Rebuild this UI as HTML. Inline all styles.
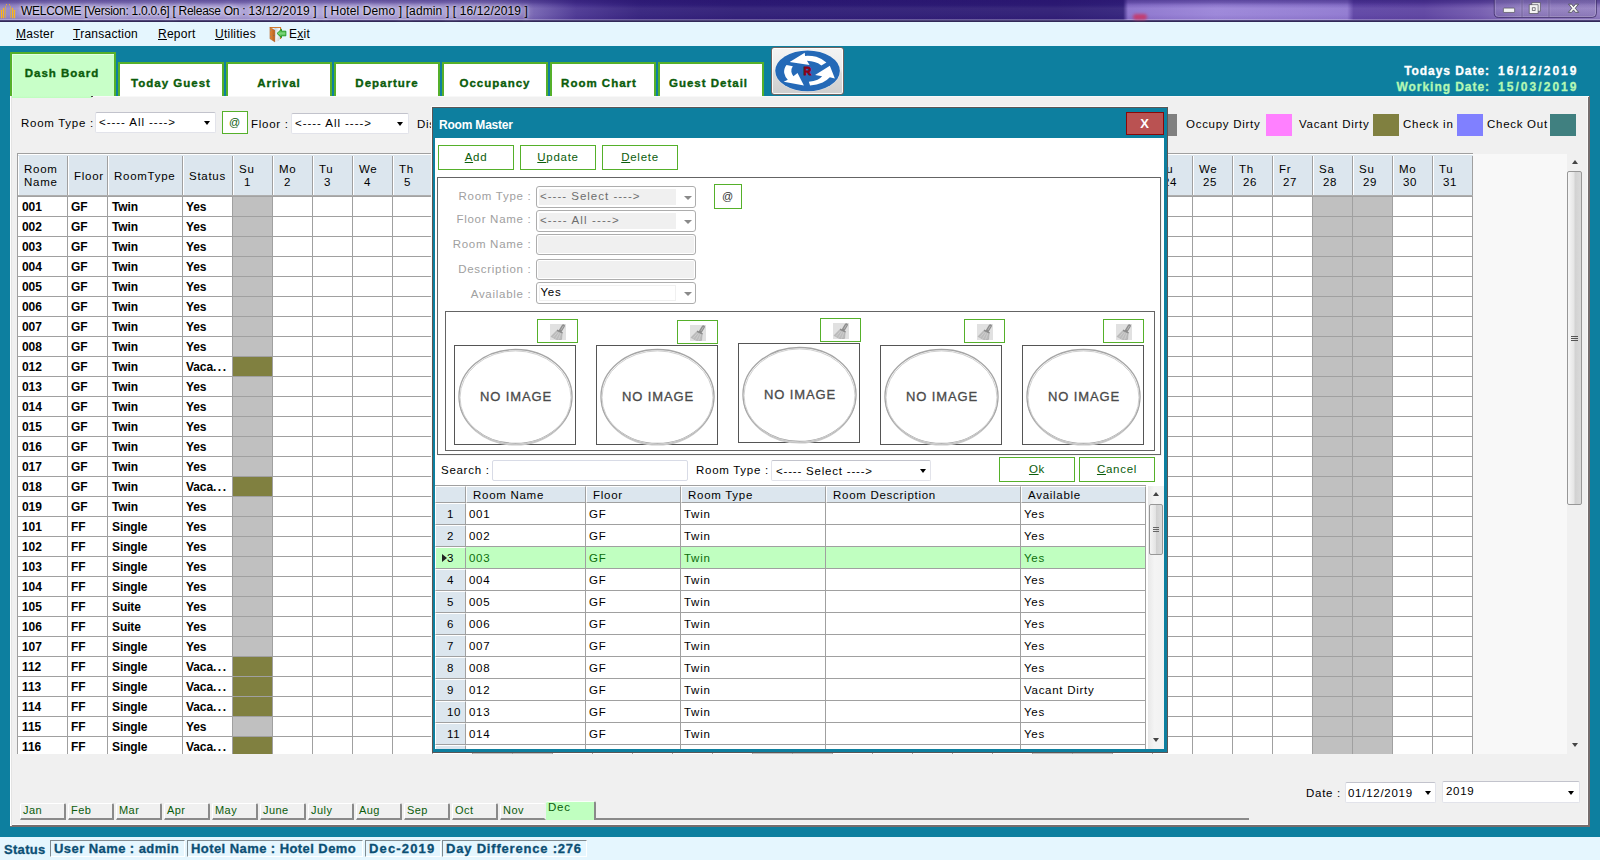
<!DOCTYPE html><html><head><meta charset="utf-8"><title>Room Master</title><style>
*{box-sizing:border-box;margin:0;padding:0}
html,body{width:1600px;height:860px;overflow:hidden;background:#0d7f9f;font-family:"Liberation Sans",sans-serif;font-size:12px;color:#000}
.a{position:absolute;white-space:pre}
.t{position:absolute;white-space:pre;font-size:11.5px;letter-spacing:.72px;line-height:14px}
.b{font-weight:bold}
u{text-decoration:underline}
#title{left:0;top:0;width:1600px;height:21px;background:linear-gradient(90deg,#9486c4 0,#a195cf 3%,#a79bd3 20%,#9a8cca 30%,#7260b0 33.5%,#4a3592 36%,#33207c 40%,#2d1b75 46%,#2c1a73 66%,#31207a 70.2%,#8a72cc 70.5%,#9a84d8 76%,#8f78d0 84.2%,#5d43a4 84.6%,#5c42a0 89%,#7259ae 92.5%,#8a75bc 95%,#8e7abf 100%)}
#titleshade{left:0;top:0;width:1600px;height:21px;background:linear-gradient(180deg,rgba(40,20,110,.55) 0,rgba(40,20,110,.4) 12%,rgba(40,20,110,.12) 24%,rgba(255,255,255,.06) 40%,rgba(255,255,255,.04) 70%,rgba(60,30,120,.12) 100%)}
#menu{left:0;top:22px;width:1600px;height:24px;background:#e5f6fe}
.tab{position:absolute;top:62px;height:36px;width:106px;border:2px solid #55b02a;border-bottom:none;background:#fff;color:#0b5c0b;font-weight:bold;font-size:11.5px;letter-spacing:1px;text-align:center;line-height:39px;white-space:pre;-webkit-text-stroke:.35px #0b5c0b}
#panel{left:10px;top:96px;width:1580px;height:731px;background:#f0f0f0;border-right:2px solid #756d6d;border-bottom:2px solid #756d6d;box-shadow:inset -1px -1px 0 #fafafa}
.combo{position:absolute;background:#fff;border:1px solid #e2e3ea;border-top-color:#c2c3cc;border-radius:2px;height:21px}
.arrow{position:absolute;width:0;height:0;border-left:3.5px solid transparent;border-right:3.5px solid transparent;border-top:4px solid #000;margin-top:-1px;margin-left:.5px}
.gbtn{position:absolute;border:1px solid #55b02a;background:#fff;color:#0b5c0b;text-align:center;white-space:pre;font-size:11.5px;letter-spacing:.72px}
.sw{position:absolute;top:114px;width:26px;height:22px}
.hc{position:absolute;top:0;height:42px;background:#dce6ee;border-right:1px solid #a0a0a0;border-left:1px solid #fff;font-size:11.5px;letter-spacing:.72px;line-height:13px;white-space:pre}
.row{position:absolute;left:0;height:20px;width:1455px}
.c{position:absolute;top:0;height:20px;border-right:1px solid #a0a0a0;border-bottom:1px solid #a0a0a0;background:#fff;font-weight:bold;font-size:12px;letter-spacing:-.1px;line-height:21px;white-space:pre;overflow:hidden}
.mt{position:absolute;top:803px;width:46px;height:17px;border-right:2px solid #8a8a8a;border-bottom:2px solid #8a8a8a;border-top:1px solid #fff;border-left:1px solid #fff;color:#0b5c0b;font-size:11px;letter-spacing:.45px;line-height:12px;padding-left:2px;white-space:pre;background:#f0f0f0;border-radius:2px 2px 0 0}
.sp{position:absolute;top:840px;height:17px;border:1px solid #7f8a90;border-right-color:#fff;border-bottom-color:#fff;color:#0c4f74;font-weight:bold;font-size:13px;letter-spacing:.43px;line-height:16px;padding-left:3px;white-space:pre;-webkit-text-stroke:.3px #0c4f74}
.lbl{position:absolute;color:#a0a0a0;text-align:right;font-size:11.5px;letter-spacing:.72px;white-space:pre;width:95px;left:436.5px}
.dcombo{position:absolute;left:536px;width:160px;height:22px;border:1px solid #adadad;border-radius:3px;background:#fff}
.dinner{position:absolute;left:2px;top:2px;width:137px;height:16px;background:#f0f0f0;font-size:11.5px;letter-spacing:.72px;line-height:15px;color:#6d6d6d;padding-left:1px;white-space:pre}
.darrow{position:absolute;left:147px;top:9px;width:0;height:0;border-left:4px solid transparent;border-right:4px solid transparent;border-top:4px solid #8a8a8a}
.dinput{position:absolute;left:536px;width:160px;height:21px;border:1px solid #adadad;border-radius:3px;background:#f0f0f0;box-shadow:inset 0 0 0 1px #fff}
.imgbox{position:absolute;width:122px;height:100px;border:1px solid #555;background:#fff}
.clr{position:absolute;width:41px;height:24px;border:1px solid #55b02a;background:#fff}
.dh{position:absolute;top:0;height:17px;background:#dce6ee;border-right:1px solid #a0a0a0;border-bottom:1px solid #a0a0a0;font-size:11.5px;letter-spacing:.72px;line-height:15px;white-space:pre;padding-left:6px}
.dr{position:absolute;left:0;width:711px;height:22px}
.dc{position:absolute;top:0;height:22px;border-right:1px solid #a0a0a0;border-bottom:1px solid #a0a0a0;background:#fff;font-size:11.5px;letter-spacing:.72px;line-height:23px;white-space:pre;padding-left:3px;overflow:hidden}
.sel .dc{background:#c0ffc0;color:#0b6e0b}
.sel .rh{color:#000}
.dc.rh{line-height:21px}
.rh{background:#dce6ee;text-align:left;padding-left:11px;border-top:1px solid #fff;border-left:1px solid #fff}
</style></head><body>
<div class="a" id="title"></div><div class="a" id="titleshade"></div>
<div class="a" style="left:0;top:19px;width:1600px;height:1px;background:rgba(255,255,255,.28)"></div>
<div class="a" style="left:0;top:20px;width:1600px;height:2px;background:linear-gradient(180deg,#5b4f86,#241d48)"></div>
<div class="a" style="left:1133px;top:14px;width:14px;height:6px;border-radius:3px;background:#d0305a;filter:blur(1.5px);opacity:.8"></div>
<svg class="a" style="left:0;top:0" width="56" height="24" viewBox="0 0 1600 686"><g stroke-linecap="round" stroke-width="34"><line x1="42" y1="295" x2="42" y2="505" stroke="#fdb813"/><line x1="100" y1="240" x2="100" y2="505" stroke="#fdb813"/><line x1="156" y1="190" x2="156" y2="505" stroke="#d8a850" stroke-width="24"/><line x1="300" y1="190" x2="300" y2="505" stroke="#d8a850" stroke-width="24"/><line x1="357" y1="240" x2="357" y2="505" stroke="#fdb813"/><line x1="415" y1="295" x2="415" y2="505" stroke="#fdb813"/></g><circle cx="185" cy="130" r="17" fill="#f0b030"/><circle cx="270" cy="130" r="17" fill="#f0b030"/><path d="M185 140 L150 200 M270 140 L305 200" stroke="#dca848" stroke-width="12" fill="none"/></svg>
<div class="a" style="left:21px;top:4px;font-size:12px;letter-spacing:-.2px;line-height:14px;text-shadow:0 0 6px rgba(255,255,255,.9),0 0 3px rgba(255,255,255,.8)"><span style="letter-spacing:-.27px">WELCOME [Version: 1.0.0.6] [ Release On : </span><span style="letter-spacing:.13px">13/12/2019 ]  [ Hotel Demo ] [admin ] [ 16/12/2019 ]</span></div>
<svg class="a" style="left:1480px;top:0" width="120" height="24" viewBox="0 0 1600 320"><defs><linearGradient id="wb" x1="0" x2="0" y1="0" y2="1"><stop offset="0" stop-color="#fff" stop-opacity=".16"/><stop offset=".5" stop-color="#fff" stop-opacity=".06"/><stop offset="1" stop-color="#000" stop-opacity=".05"/></linearGradient></defs><path d="M190 -20 L190 180 Q190 232 245 232 L1500 232 Q1552 232 1552 180 L1552 -20 Z" fill="url(#wb)" stroke="#392a62" stroke-width="10"/><path d="M203 -20 L203 176 Q203 220 248 220 L1496 220 Q1540 220 1540 176 L1540 -20" fill="none" stroke="#fff" stroke-opacity=".42" stroke-width="7"/><path d="M560 0 L560 225 M920 0 L920 225" stroke="#43346e" stroke-width="8"/><path d="M571 0 L571 222 M931 0 L931 222 M549 0 L549 222 M909 0 L909 222" stroke="#fff" stroke-opacity=".35" stroke-width="6"/><rect x="312" y="108" width="150" height="58" rx="8" fill="#f4f4f4" stroke="#4a4a52" stroke-width="9"/><path d="M690 35 L805 35 L805 150 L690 150 Z" fill="#f4f4f4" stroke="#4a4a52" stroke-width="9"/><path d="M657 62 L775 62 L775 180 L657 180 Z M698 102 L698 140 L736 140 L736 102 Z" fill="#f4f4f4" fill-rule="evenodd" stroke="#4a4a52" stroke-width="9"/><path d="M1180 55 L1222 55 L1247 88 L1272 55 L1314 55 L1270 110 L1316 165 L1272 165 L1247 132 L1222 165 L1178 165 L1224 110 Z" fill="#f6f6f6" stroke="#4a4a52" stroke-width="11" stroke-linejoin="round"/></svg>
<div class="a" id="menu"></div>
<div class="a" style="left:16px;top:27px;font-size:12px;letter-spacing:.25px;line-height:14px"><u>M</u>aster</div>
<div class="a" style="left:73px;top:27px;font-size:12px;letter-spacing:.25px;line-height:14px"><u>T</u>ransaction</div>
<div class="a" style="left:158px;top:27px;font-size:12px;letter-spacing:.25px;line-height:14px"><u>R</u>eport</div>
<div class="a" style="left:215px;top:27px;font-size:12px;letter-spacing:.25px;line-height:14px"><u>U</u>tilities</div>
<div class="a" style="left:289px;top:27px;font-size:12px;letter-spacing:.25px;line-height:14px">E<u>x</u>it</div>
<svg class="a" style="left:264px;top:22px" width="56" height="24" viewBox="0 0 1600 686"><defs><linearGradient id="dg" x1="0" x2="1"><stop offset="0" stop-color="#e08a3c"/><stop offset="1" stop-color="#b85e1c"/></linearGradient><linearGradient id="pg" x1="0" x2="1" y1="0" y2="1"><stop offset="0" stop-color="#bcd0dc"/><stop offset=".5" stop-color="#f4f6f8"/><stop offset="1" stop-color="#c4ccd2"/></linearGradient><linearGradient id="ag" y1="0" y2="1" x1="0" x2="0"><stop offset="0" stop-color="#2aa82a"/><stop offset=".5" stop-color="#7ad67a"/><stop offset="1" stop-color="#2aa82a"/></linearGradient></defs><path d="M165 140 L488 140 L488 485 L455 485 L455 172 L165 172 Z" fill="#d07a30"/><path d="M300 175 L455 175 L455 480 L420 545 L300 565 Z" fill="url(#pg)"/><path d="M168 150 L310 235 L310 572 L168 478 Z" fill="url(#dg)" stroke="#a85418" stroke-width="10"/><rect x="172" y="228" width="22" height="26" fill="#8a8a8a"/><rect x="172" y="400" width="22" height="26" fill="#8a8a8a"/><rect x="262" y="375" width="40" height="22" fill="#7a6a5a"/><path d="M372 326 L500 205 L500 262 L625 262 L625 395 L500 395 L500 450 Z" fill="url(#ag)" stroke="#0c8c0c" stroke-width="22" stroke-linejoin="round"/></svg>
<div class="tab" style="left:10px;top:52px;height:46px;background:#c8ffc8;line-height:38px;padding-right:2px;box-shadow:inset 1px 1px 0 rgba(255,255,255,.5)">Dash Board</div>
<div class="tab" style="left:118px;padding-right:0px">Today Guest</div>
<div class="tab" style="left:226px;padding-right:0px">Arrival</div>
<div class="tab" style="left:334px;padding-right:0px">Departure</div>
<div class="tab" style="left:442px;padding-right:0px">Occupancy</div>
<div class="tab" style="left:550px;padding-right:8px">Room Chart</div>
<div class="tab" style="left:658px;padding-right:5px">Guest Detail</div>
<div class="a" style="left:771px;top:47px;width:73px;height:48px;border:1px solid #6e6462;border-radius:3px;background:linear-gradient(180deg,#f3f3f3 0,#ebebeb 45%,#d9d9d9 55%,#cecece 100%);box-shadow:inset 0 0 0 1px rgba(255,255,255,.85)"></div>
<svg class="a" style="left:768px;top:44px" width="80" height="54" viewBox="0 0 1274 860"><ellipse cx="630" cy="428" rx="522" ry="330" fill="#fff" opacity=".7"/><ellipse cx="630" cy="428" rx="515" ry="324" fill="#2469b7"/><g fill="#fff"><path d="M345 285 L585 140 L590 190 Q690 185 770 205 Q860 235 930 295 L850 342 Q800 300 740 285 Q690 268 620 265 L662 335 Z"/><path d="M985 345 L1065 550 L985 530 Q940 580 870 612 Q780 650 670 660 L650 600 Q730 592 790 568 Q830 550 862 515 L750 492 Z"/><path d="M572 662 L250 600 L315 570 Q270 520 258 460 Q250 390 295 335 L395 355 Q365 400 372 440 Q380 485 405 515 L470 460 Z"/></g><text x="627" y="492" text-anchor="middle" font-family="Liberation Sans,sans-serif" font-weight="bold" font-size="172" fill="#8b0018" stroke="#8b0018" stroke-width="12">R</text></svg>
<div class="a b" style="right:110px;top:64px;font-size:12px;letter-spacing:.95px;color:#fff;line-height:14px;-webkit-text-stroke:.3px #fff">Todays Date:</div>
<div class="a b" style="left:1498px;top:64px;font-size:12px;letter-spacing:2.05px;color:#fff;line-height:14px;-webkit-text-stroke:.3px #fff">16/12/2019</div>
<div class="a b" style="right:110px;top:80px;font-size:12px;letter-spacing:.95px;color:#b4f8b4;line-height:14px;-webkit-text-stroke:.3px #b4f8b4">Working Date:</div>
<div class="a b" style="left:1498px;top:80px;font-size:12px;letter-spacing:2.05px;color:#b4f8b4;line-height:14px;-webkit-text-stroke:.3px #b4f8b4">15/03/2019</div>
<div class="a" id="panel"></div>
<div class="a" style="left:10px;top:96px;width:1px;height:730px;background:#fff"></div>
<div class="a" style="left:11px;top:96px;width:1px;height:730px;background:#e3e3e3"></div>
<div class="a" style="left:12px;top:96px;width:80px;height:2px;background:linear-gradient(180deg,#c8ffc8,#bdfcbd)"></div>
<div class="a" style="left:92px;top:96px;width:1497px;height:1px;background:#f8f8f8"></div>
<div class="a" style="left:91px;top:96px;width:2px;height:1px;background:#444"></div>
<div class="t" style="left:21px;top:116px">Room Type :</div>
<div class="combo" style="left:95px;top:112px;width:121px"><div class="t" style="left:3px;top:2px;letter-spacing:.95px">&lt;---- All ----&gt;</div><div class="arrow" style="left:107px;top:9px"></div></div>
<div class="gbtn" style="left:222px;top:111px;width:26px;height:23px;line-height:21px;font-size:11px">@</div>
<div class="t" style="left:251px;top:117px">Floor :</div>
<div class="combo" style="left:291px;top:113px;width:118px"><div class="t" style="left:3px;top:2px;letter-spacing:.95px">&lt;---- All ----&gt;</div><div class="arrow" style="left:104px;top:9px"></div></div>
<div class="t" style="left:417px;top:117px">Dis</div>
<div class="sw" style="left:1151px;background:#808080"></div>
<div class="t" style="left:1186px;top:117px">Occupy Dirty</div>
<div class="sw" style="left:1266px;background:#ff80ff"></div>
<div class="t" style="left:1299px;top:117px">Vacant Dirty</div>
<div class="sw" style="left:1373px;background:#808040"></div>
<div class="t" style="left:1403px;top:117px">Check in</div>
<div class="sw" style="left:1457px;background:#8080ff"></div>
<div class="t" style="left:1487px;top:117px">Check Out</div>
<div class="sw" style="left:1550px;background:#408080"></div>
<div class="a" style="left:17px;top:153px;width:1456px;height:1px;background:#a0a0a0"></div>
<div class="a" style="left:17px;top:153px;width:1px;height:601px;background:#a0a0a0"></div>
<div class="a" style="left:18px;top:154px;width:1565px;height:600px;background:#f8f8f8;overflow:hidden">
<div class="hc" style="left:0px;width:50px;padding:9px 0 0 5px">Room
Name</div>
<div class="hc" style="left:50px;width:40px;padding:16px 0 0 5px">Floor</div>
<div class="hc" style="left:90px;width:75px;padding:16px 0 0 5px">RoomType</div>
<div class="hc" style="left:165px;width:50px;padding:16px 0 0 5px">Status</div>
<div class="hc" style="left:215px;width:40px;padding:9px 0 0 5px">Su
<span style="padding-left:5px">1</span></div>
<div class="hc" style="left:255px;width:40px;padding:9px 0 0 5px">Mo
<span style="padding-left:5px">2</span></div>
<div class="hc" style="left:295px;width:40px;padding:9px 0 0 5px">Tu
<span style="padding-left:5px">3</span></div>
<div class="hc" style="left:335px;width:40px;padding:9px 0 0 5px">We
<span style="padding-left:5px">4</span></div>
<div class="hc" style="left:375px;width:40px;padding:9px 0 0 5px">Th
<span style="padding-left:5px">5</span></div>
<div class="hc" style="left:415px;width:40px;padding:9px 0 0 5px">Fr
<span style="padding-left:5px">6</span></div>
<div class="hc" style="left:455px;width:40px;padding:9px 0 0 5px">Sa
<span style="padding-left:5px">7</span></div>
<div class="hc" style="left:495px;width:40px;padding:9px 0 0 5px">Su
<span style="padding-left:5px">8</span></div>
<div class="hc" style="left:535px;width:40px;padding:9px 0 0 5px">Mo
<span style="padding-left:5px">9</span></div>
<div class="hc" style="left:575px;width:40px;padding:9px 0 0 5px">Tu
<span style="padding-left:4px">10</span></div>
<div class="hc" style="left:615px;width:40px;padding:9px 0 0 5px">We
<span style="padding-left:4px">11</span></div>
<div class="hc" style="left:655px;width:40px;padding:9px 0 0 5px">Th
<span style="padding-left:4px">12</span></div>
<div class="hc" style="left:695px;width:40px;padding:9px 0 0 5px">Fr
<span style="padding-left:4px">13</span></div>
<div class="hc" style="left:735px;width:40px;padding:9px 0 0 5px">Sa
<span style="padding-left:4px">14</span></div>
<div class="hc" style="left:775px;width:40px;padding:9px 0 0 5px">Su
<span style="padding-left:4px">15</span></div>
<div class="hc" style="left:815px;width:40px;padding:9px 0 0 5px">Mo
<span style="padding-left:4px">16</span></div>
<div class="hc" style="left:855px;width:40px;padding:9px 0 0 5px">Tu
<span style="padding-left:4px">17</span></div>
<div class="hc" style="left:895px;width:40px;padding:9px 0 0 5px">We
<span style="padding-left:4px">18</span></div>
<div class="hc" style="left:935px;width:40px;padding:9px 0 0 5px">Th
<span style="padding-left:4px">19</span></div>
<div class="hc" style="left:975px;width:40px;padding:9px 0 0 5px">Fr
<span style="padding-left:4px">20</span></div>
<div class="hc" style="left:1015px;width:40px;padding:9px 0 0 5px">Sa
<span style="padding-left:4px">21</span></div>
<div class="hc" style="left:1055px;width:40px;padding:9px 0 0 5px">Su
<span style="padding-left:4px">22</span></div>
<div class="hc" style="left:1095px;width:40px;padding:9px 0 0 5px">Mo
<span style="padding-left:4px">23</span></div>
<div class="hc" style="left:1135px;width:40px;padding:9px 0 0 5px">Tu
<span style="padding-left:4px">24</span></div>
<div class="hc" style="left:1175px;width:40px;padding:9px 0 0 5px">We
<span style="padding-left:4px">25</span></div>
<div class="hc" style="left:1215px;width:40px;padding:9px 0 0 5px">Th
<span style="padding-left:4px">26</span></div>
<div class="hc" style="left:1255px;width:40px;padding:9px 0 0 5px">Fr
<span style="padding-left:4px">27</span></div>
<div class="hc" style="left:1295px;width:40px;padding:9px 0 0 5px">Sa
<span style="padding-left:4px">28</span></div>
<div class="hc" style="left:1335px;width:40px;padding:9px 0 0 5px">Su
<span style="padding-left:4px">29</span></div>
<div class="hc" style="left:1375px;width:40px;padding:9px 0 0 5px">Mo
<span style="padding-left:4px">30</span></div>
<div class="hc" style="left:1415px;width:40px;padding:9px 0 0 5px">Tu
<span style="padding-left:4px">31</span></div>
<div class="a" style="left:0;top:0;width:1455px;height:2px;background:linear-gradient(180deg,#fff 1px,#dce6ee 1px)"></div>
<div class="a" style="left:0;top:41px;width:1455px;height:2px;background:linear-gradient(180deg,#b4b4b4,#9c9c9c)"></div>
<div class="a" style="left:215px;top:43px;width:1240px;height:560px;background-color:#fff;background-image:linear-gradient(90deg,transparent 39px,#a0a0a0 39px),linear-gradient(180deg,transparent 19px,#a0a0a0 19px);background-size:40px 20px"></div>
<div class="a" style="left:215px;top:43px;width:39px;height:560px;background-color:#c0c0c0;background-image:linear-gradient(180deg,transparent 19px,#a0a0a0 19px);background-size:40px 20px"></div>
<div class="a" style="left:455px;top:43px;width:39px;height:560px;background-color:#c0c0c0;background-image:linear-gradient(180deg,transparent 19px,#a0a0a0 19px);background-size:40px 20px"></div>
<div class="a" style="left:495px;top:43px;width:39px;height:560px;background-color:#c0c0c0;background-image:linear-gradient(180deg,transparent 19px,#a0a0a0 19px);background-size:40px 20px"></div>
<div class="a" style="left:735px;top:43px;width:39px;height:560px;background-color:#c0c0c0;background-image:linear-gradient(180deg,transparent 19px,#a0a0a0 19px);background-size:40px 20px"></div>
<div class="a" style="left:775px;top:43px;width:39px;height:560px;background-color:#c0c0c0;background-image:linear-gradient(180deg,transparent 19px,#a0a0a0 19px);background-size:40px 20px"></div>
<div class="a" style="left:1015px;top:43px;width:39px;height:560px;background-color:#c0c0c0;background-image:linear-gradient(180deg,transparent 19px,#a0a0a0 19px);background-size:40px 20px"></div>
<div class="a" style="left:1055px;top:43px;width:39px;height:560px;background-color:#c0c0c0;background-image:linear-gradient(180deg,transparent 19px,#a0a0a0 19px);background-size:40px 20px"></div>
<div class="a" style="left:1295px;top:43px;width:39px;height:560px;background-color:#c0c0c0;background-image:linear-gradient(180deg,transparent 19px,#a0a0a0 19px);background-size:40px 20px"></div>
<div class="a" style="left:1335px;top:43px;width:39px;height:560px;background-color:#c0c0c0;background-image:linear-gradient(180deg,transparent 19px,#a0a0a0 19px);background-size:40px 20px"></div>
<div class="row" style="top:43px"><div class="c" style="left:0;width:50px;padding-left:4px">001</div><div class="c" style="left:50px;width:40px;padding-left:3px">GF</div><div class="c" style="left:90px;width:75px;padding-left:4px">Twin</div><div class="c" style="left:165px;width:50px;padding-left:3px">Yes</div></div>
<div class="row" style="top:63px"><div class="c" style="left:0;width:50px;padding-left:4px">002</div><div class="c" style="left:50px;width:40px;padding-left:3px">GF</div><div class="c" style="left:90px;width:75px;padding-left:4px">Twin</div><div class="c" style="left:165px;width:50px;padding-left:3px">Yes</div></div>
<div class="row" style="top:83px"><div class="c" style="left:0;width:50px;padding-left:4px">003</div><div class="c" style="left:50px;width:40px;padding-left:3px">GF</div><div class="c" style="left:90px;width:75px;padding-left:4px">Twin</div><div class="c" style="left:165px;width:50px;padding-left:3px">Yes</div></div>
<div class="row" style="top:103px"><div class="c" style="left:0;width:50px;padding-left:4px">004</div><div class="c" style="left:50px;width:40px;padding-left:3px">GF</div><div class="c" style="left:90px;width:75px;padding-left:4px">Twin</div><div class="c" style="left:165px;width:50px;padding-left:3px">Yes</div></div>
<div class="row" style="top:123px"><div class="c" style="left:0;width:50px;padding-left:4px">005</div><div class="c" style="left:50px;width:40px;padding-left:3px">GF</div><div class="c" style="left:90px;width:75px;padding-left:4px">Twin</div><div class="c" style="left:165px;width:50px;padding-left:3px">Yes</div></div>
<div class="row" style="top:143px"><div class="c" style="left:0;width:50px;padding-left:4px">006</div><div class="c" style="left:50px;width:40px;padding-left:3px">GF</div><div class="c" style="left:90px;width:75px;padding-left:4px">Twin</div><div class="c" style="left:165px;width:50px;padding-left:3px">Yes</div></div>
<div class="row" style="top:163px"><div class="c" style="left:0;width:50px;padding-left:4px">007</div><div class="c" style="left:50px;width:40px;padding-left:3px">GF</div><div class="c" style="left:90px;width:75px;padding-left:4px">Twin</div><div class="c" style="left:165px;width:50px;padding-left:3px">Yes</div></div>
<div class="row" style="top:183px"><div class="c" style="left:0;width:50px;padding-left:4px">008</div><div class="c" style="left:50px;width:40px;padding-left:3px">GF</div><div class="c" style="left:90px;width:75px;padding-left:4px">Twin</div><div class="c" style="left:165px;width:50px;padding-left:3px">Yes</div></div>
<div class="row" style="top:203px"><div class="c" style="left:0;width:50px;padding-left:4px">012</div><div class="c" style="left:50px;width:40px;padding-left:3px">GF</div><div class="c" style="left:90px;width:75px;padding-left:4px">Twin</div><div class="c" style="left:165px;width:50px;padding-left:3px">Vaca<span style="letter-spacing:1.5px">...</span></div><div class="a" style="left:215px;top:0;width:39px;height:19px;background:#808040"></div></div>
<div class="row" style="top:223px"><div class="c" style="left:0;width:50px;padding-left:4px">013</div><div class="c" style="left:50px;width:40px;padding-left:3px">GF</div><div class="c" style="left:90px;width:75px;padding-left:4px">Twin</div><div class="c" style="left:165px;width:50px;padding-left:3px">Yes</div></div>
<div class="row" style="top:243px"><div class="c" style="left:0;width:50px;padding-left:4px">014</div><div class="c" style="left:50px;width:40px;padding-left:3px">GF</div><div class="c" style="left:90px;width:75px;padding-left:4px">Twin</div><div class="c" style="left:165px;width:50px;padding-left:3px">Yes</div></div>
<div class="row" style="top:263px"><div class="c" style="left:0;width:50px;padding-left:4px">015</div><div class="c" style="left:50px;width:40px;padding-left:3px">GF</div><div class="c" style="left:90px;width:75px;padding-left:4px">Twin</div><div class="c" style="left:165px;width:50px;padding-left:3px">Yes</div></div>
<div class="row" style="top:283px"><div class="c" style="left:0;width:50px;padding-left:4px">016</div><div class="c" style="left:50px;width:40px;padding-left:3px">GF</div><div class="c" style="left:90px;width:75px;padding-left:4px">Twin</div><div class="c" style="left:165px;width:50px;padding-left:3px">Yes</div></div>
<div class="row" style="top:303px"><div class="c" style="left:0;width:50px;padding-left:4px">017</div><div class="c" style="left:50px;width:40px;padding-left:3px">GF</div><div class="c" style="left:90px;width:75px;padding-left:4px">Twin</div><div class="c" style="left:165px;width:50px;padding-left:3px">Yes</div></div>
<div class="row" style="top:323px"><div class="c" style="left:0;width:50px;padding-left:4px">018</div><div class="c" style="left:50px;width:40px;padding-left:3px">GF</div><div class="c" style="left:90px;width:75px;padding-left:4px">Twin</div><div class="c" style="left:165px;width:50px;padding-left:3px">Vaca<span style="letter-spacing:1.5px">...</span></div><div class="a" style="left:215px;top:0;width:39px;height:19px;background:#808040"></div></div>
<div class="row" style="top:343px"><div class="c" style="left:0;width:50px;padding-left:4px">019</div><div class="c" style="left:50px;width:40px;padding-left:3px">GF</div><div class="c" style="left:90px;width:75px;padding-left:4px">Twin</div><div class="c" style="left:165px;width:50px;padding-left:3px">Yes</div></div>
<div class="row" style="top:363px"><div class="c" style="left:0;width:50px;padding-left:4px">101</div><div class="c" style="left:50px;width:40px;padding-left:3px">FF</div><div class="c" style="left:90px;width:75px;padding-left:4px">Single</div><div class="c" style="left:165px;width:50px;padding-left:3px">Yes</div></div>
<div class="row" style="top:383px"><div class="c" style="left:0;width:50px;padding-left:4px">102</div><div class="c" style="left:50px;width:40px;padding-left:3px">FF</div><div class="c" style="left:90px;width:75px;padding-left:4px">Single</div><div class="c" style="left:165px;width:50px;padding-left:3px">Yes</div></div>
<div class="row" style="top:403px"><div class="c" style="left:0;width:50px;padding-left:4px">103</div><div class="c" style="left:50px;width:40px;padding-left:3px">FF</div><div class="c" style="left:90px;width:75px;padding-left:4px">Single</div><div class="c" style="left:165px;width:50px;padding-left:3px">Yes</div></div>
<div class="row" style="top:423px"><div class="c" style="left:0;width:50px;padding-left:4px">104</div><div class="c" style="left:50px;width:40px;padding-left:3px">FF</div><div class="c" style="left:90px;width:75px;padding-left:4px">Single</div><div class="c" style="left:165px;width:50px;padding-left:3px">Yes</div></div>
<div class="row" style="top:443px"><div class="c" style="left:0;width:50px;padding-left:4px">105</div><div class="c" style="left:50px;width:40px;padding-left:3px">FF</div><div class="c" style="left:90px;width:75px;padding-left:4px">Suite</div><div class="c" style="left:165px;width:50px;padding-left:3px">Yes</div></div>
<div class="row" style="top:463px"><div class="c" style="left:0;width:50px;padding-left:4px">106</div><div class="c" style="left:50px;width:40px;padding-left:3px">FF</div><div class="c" style="left:90px;width:75px;padding-left:4px">Suite</div><div class="c" style="left:165px;width:50px;padding-left:3px">Yes</div></div>
<div class="row" style="top:483px"><div class="c" style="left:0;width:50px;padding-left:4px">107</div><div class="c" style="left:50px;width:40px;padding-left:3px">FF</div><div class="c" style="left:90px;width:75px;padding-left:4px">Single</div><div class="c" style="left:165px;width:50px;padding-left:3px">Yes</div></div>
<div class="row" style="top:503px"><div class="c" style="left:0;width:50px;padding-left:4px">112</div><div class="c" style="left:50px;width:40px;padding-left:3px">FF</div><div class="c" style="left:90px;width:75px;padding-left:4px">Single</div><div class="c" style="left:165px;width:50px;padding-left:3px">Vaca<span style="letter-spacing:1.5px">...</span></div><div class="a" style="left:215px;top:0;width:39px;height:19px;background:#808040"></div></div>
<div class="row" style="top:523px"><div class="c" style="left:0;width:50px;padding-left:4px">113</div><div class="c" style="left:50px;width:40px;padding-left:3px">FF</div><div class="c" style="left:90px;width:75px;padding-left:4px">Single</div><div class="c" style="left:165px;width:50px;padding-left:3px">Vaca<span style="letter-spacing:1.5px">...</span></div><div class="a" style="left:215px;top:0;width:39px;height:19px;background:#808040"></div></div>
<div class="row" style="top:543px"><div class="c" style="left:0;width:50px;padding-left:4px">114</div><div class="c" style="left:50px;width:40px;padding-left:3px">FF</div><div class="c" style="left:90px;width:75px;padding-left:4px">Single</div><div class="c" style="left:165px;width:50px;padding-left:3px">Vaca<span style="letter-spacing:1.5px">...</span></div><div class="a" style="left:215px;top:0;width:39px;height:19px;background:#808040"></div></div>
<div class="row" style="top:563px"><div class="c" style="left:0;width:50px;padding-left:4px">115</div><div class="c" style="left:50px;width:40px;padding-left:3px">FF</div><div class="c" style="left:90px;width:75px;padding-left:4px">Single</div><div class="c" style="left:165px;width:50px;padding-left:3px">Yes</div></div>
<div class="row" style="top:583px"><div class="c" style="left:0;width:50px;padding-left:4px">116</div><div class="c" style="left:50px;width:40px;padding-left:3px">FF</div><div class="c" style="left:90px;width:75px;padding-left:4px">Single</div><div class="c" style="left:165px;width:50px;padding-left:3px">Vaca<span style="letter-spacing:1.5px">...</span></div><div class="a" style="left:215px;top:0;width:39px;height:19px;background:#808040"></div></div>
<div class="a" style="left:1549px;top:0;width:16px;height:601px;background:#f0f0f0"></div>
<div class="a" style="left:1549px;top:17px;width:15px;height:334px;border:1px solid #979797;border-radius:2px;background:linear-gradient(90deg,#f6f6f6,#e6e6e6 45%,#d2d2d2 55%,#dadada)"></div>
<div class="a" style="left:1553px;top:182px;width:7px;height:1px;background:#555;box-shadow:0 2px 0 #555,0 4px 0 #555"></div>
<div class="arrow" style="left:1553px;top:7px;border-top:none;border-bottom:4px solid #444"></div>
<div class="arrow" style="left:1553px;top:590px;border-top:4px solid #444"></div>
</div>
<div class="a" style="left:596px;top:818px;width:653px;height:2px;background:#8a8a8a"></div>
<div class="mt" style="left:20px">Jan</div>
<div class="mt" style="left:68px">Feb</div>
<div class="mt" style="left:116px">Mar</div>
<div class="mt" style="left:164px">Apr</div>
<div class="mt" style="left:212px">May</div>
<div class="mt" style="left:260px">June</div>
<div class="mt" style="left:308px">July</div>
<div class="mt" style="left:356px">Aug</div>
<div class="mt" style="left:404px">Sep</div>
<div class="mt" style="left:452px">Oct</div>
<div class="mt" style="left:500px;border-right-color:transparent">Nov</div>
<div class="mt" style="left:546px;top:801px;width:50px;height:19px;background:#c0ffc0;border-top-color:#f8fff8;border-left:none;border-bottom:none;line-height:11px;padding-left:2px;font-size:11.5px;letter-spacing:.72px">Dec</div>
<div class="t" style="left:1306px;top:786px">Date :</div>
<div class="combo" style="left:1345px;top:782px;width:91px;height:21px"><div class="t" style="left:2px;top:3px">01/12/2019</div><div class="arrow" style="left:78px;top:9px"></div></div>
<div class="combo" style="left:1442px;top:781px;width:138px;height:22px"><div class="t" style="left:3px;top:2px">2019</div><div class="arrow" style="left:124px;top:10px"></div></div>
<div class="a" style="left:0;top:837px;width:1600px;height:23px;background:#e5f6fe"></div>
<div class="a b" style="left:4px;top:842px;color:#0c4f74;font-size:13px;letter-spacing:.3px;line-height:15px;-webkit-text-stroke:.3px #0c4f74">Status</div>
<div class="sp" style="left:50px;width:135px">User Name : admin</div>
<div class="sp" style="left:187px;width:176px">Hotel Name : Hotel Demo</div>
<div class="sp" style="left:365px;width:76px;letter-spacing:1.15px">Dec-2019</div>
<div class="sp" style="left:442px;width:145px;letter-spacing:.8px">Day Difference :276</div>
<div class="a" style="left:432px;top:107px;width:736px;height:646px;background:#0d7f9f;border:1px solid #5a5656;box-shadow:-1px -1px 0 #fafafa"></div>
<div class="a" style="left:435px;top:138px;width:729px;height:611px;background:#fff;overflow:hidden"></div>
<div class="a b" style="left:439px;top:118px;color:#fff;font-size:12px;letter-spacing:-.2px;line-height:14px">Room Master</div>
<div class="a b" style="left:1126px;top:112px;width:38px;height:23px;background:#ba5252;border:1px solid #8b0808;color:#fff;text-align:center;font-size:13px;line-height:21px;padding-right:1px">X</div>
<div class="gbtn" style="left:438px;top:145px;width:76px;height:25px;line-height:23px"><u>A</u>dd</div>
<div class="gbtn" style="left:520px;top:145px;width:76px;height:25px;line-height:23px"><u>U</u>pdate</div>
<div class="gbtn" style="left:602px;top:145px;width:76px;height:25px;line-height:23px"><u>D</u>elete</div>
<div class="a" style="left:437px;top:177px;width:724px;height:278px;border:1px solid #646464;box-shadow:inset -1px -1px 0 #fff, 1px 1px 0 #f4f4f4"></div>
<div class="lbl" style="top:189px;line-height:14px">Room Type :</div>
<div class="lbl" style="top:212px;line-height:14px">Floor Name :</div>
<div class="lbl" style="top:237px;line-height:14px">Room Name :</div>
<div class="lbl" style="top:262px;line-height:14px">Description :</div>
<div class="lbl" style="top:287px;line-height:14px">Available :</div>
<div class="dcombo" style="top:186px"><div class="dinner" style="letter-spacing:1px">&lt;---- Select ----&gt;</div><div class="darrow"></div></div>
<div class="dcombo" style="top:210px"><div class="dinner" style="letter-spacing:1.15px">&lt;---- All ----&gt;</div><div class="darrow"></div></div>
<div class="dinput" style="top:234px"></div>
<div class="dinput" style="top:259px"></div>
<div class="dcombo" style="top:282px"><div class="dinner" style="background:#fff;color:#000;border:1px solid #f0f0f0;line-height:13px;padding-left:.5px">Yes</div><div class="darrow"></div></div>
<div class="gbtn" style="left:714px;top:184px;width:28px;height:25px;line-height:23px;font-size:11px;color:#333">@</div>
<div class="a" style="left:445px;top:311px;width:710px;height:140px;border:1px solid #646464"></div>
<div class="clr" style="left:537px;top:319px"><svg style="position:absolute;left:12px;top:4px" width="16" height="16" viewBox="0 0 16 16"><rect width="16" height="16" fill="#e1e1e1"/><path d="M7 6.4 L12.2 9 L11.6 15.4 Q9 16.2 6 15.3 L1 12.6 Z" fill="#bcbcbc" stroke="#a4a4a4" stroke-width=".5"/><path d="M3 13.5 L8 7.5 M5.5 14.8 L9.5 8.2 M8.5 15.5 L11 8.8" stroke="#d4d4d4" stroke-width=".7"/><path d="M13.3 1.9 L10.6 6.3" stroke="#8e8e8e" stroke-width="3.2" stroke-linecap="round"/><path d="M13.2 2.3 L11.2 5.6" stroke="#b8b8b8" stroke-width="1" stroke-linecap="round"/><path d="M7 6.2 L12.6 8.9" stroke="#8c8c8c" stroke-width="1.5"/></svg></div>
<div class="imgbox" style="left:454px;top:345px"><svg width="120" height="98" viewBox="0 0 120 98" style="position:absolute;left:0;top:0;overflow:visible"><ellipse cx="60.5" cy="52" rx="56" ry="47" fill="#c9c9c9" stroke="#c9c9c9" stroke-width="1.2"/><ellipse cx="60.5" cy="50.5" rx="56.5" ry="47" fill="#fff" stroke="#a6a6a6" stroke-width="1.4"/><ellipse cx="60.5" cy="51.5" rx="55.5" ry="46.6" fill="none" stroke="#d0d0d0" stroke-width="1"/><text x="61" y="54.5" text-anchor="middle" font-family="Liberation Sans,sans-serif" font-size="13" letter-spacing="0.9" fill="#4a4a4a" stroke="#4a4a4a" stroke-width=".3">NO IMAGE</text></svg></div>
<div class="clr" style="left:677px;top:320px"><svg style="position:absolute;left:12px;top:4px" width="16" height="16" viewBox="0 0 16 16"><rect width="16" height="16" fill="#e1e1e1"/><path d="M7 6.4 L12.2 9 L11.6 15.4 Q9 16.2 6 15.3 L1 12.6 Z" fill="#bcbcbc" stroke="#a4a4a4" stroke-width=".5"/><path d="M3 13.5 L8 7.5 M5.5 14.8 L9.5 8.2 M8.5 15.5 L11 8.8" stroke="#d4d4d4" stroke-width=".7"/><path d="M13.3 1.9 L10.6 6.3" stroke="#8e8e8e" stroke-width="3.2" stroke-linecap="round"/><path d="M13.2 2.3 L11.2 5.6" stroke="#b8b8b8" stroke-width="1" stroke-linecap="round"/><path d="M7 6.2 L12.6 8.9" stroke="#8c8c8c" stroke-width="1.5"/></svg></div>
<div class="imgbox" style="left:596px;top:345px"><svg width="120" height="98" viewBox="0 0 120 98" style="position:absolute;left:0;top:0;overflow:visible"><ellipse cx="60.5" cy="52" rx="56" ry="47" fill="#c9c9c9" stroke="#c9c9c9" stroke-width="1.2"/><ellipse cx="60.5" cy="50.5" rx="56.5" ry="47" fill="#fff" stroke="#a6a6a6" stroke-width="1.4"/><ellipse cx="60.5" cy="51.5" rx="55.5" ry="46.6" fill="none" stroke="#d0d0d0" stroke-width="1"/><text x="61" y="54.5" text-anchor="middle" font-family="Liberation Sans,sans-serif" font-size="13" letter-spacing="0.9" fill="#4a4a4a" stroke="#4a4a4a" stroke-width=".3">NO IMAGE</text></svg></div>
<div class="clr" style="left:820px;top:318px"><svg style="position:absolute;left:12px;top:4px" width="16" height="16" viewBox="0 0 16 16"><rect width="16" height="16" fill="#e1e1e1"/><path d="M7 6.4 L12.2 9 L11.6 15.4 Q9 16.2 6 15.3 L1 12.6 Z" fill="#bcbcbc" stroke="#a4a4a4" stroke-width=".5"/><path d="M3 13.5 L8 7.5 M5.5 14.8 L9.5 8.2 M8.5 15.5 L11 8.8" stroke="#d4d4d4" stroke-width=".7"/><path d="M13.3 1.9 L10.6 6.3" stroke="#8e8e8e" stroke-width="3.2" stroke-linecap="round"/><path d="M13.2 2.3 L11.2 5.6" stroke="#b8b8b8" stroke-width="1" stroke-linecap="round"/><path d="M7 6.2 L12.6 8.9" stroke="#8c8c8c" stroke-width="1.5"/></svg></div>
<div class="imgbox" style="left:738px;top:343px"><svg width="120" height="98" viewBox="0 0 120 98" style="position:absolute;left:0;top:0;overflow:visible"><ellipse cx="60.5" cy="52" rx="56" ry="47" fill="#c9c9c9" stroke="#c9c9c9" stroke-width="1.2"/><ellipse cx="60.5" cy="50.5" rx="56.5" ry="47" fill="#fff" stroke="#a6a6a6" stroke-width="1.4"/><ellipse cx="60.5" cy="51.5" rx="55.5" ry="46.6" fill="none" stroke="#d0d0d0" stroke-width="1"/><text x="61" y="54.5" text-anchor="middle" font-family="Liberation Sans,sans-serif" font-size="13" letter-spacing="0.9" fill="#4a4a4a" stroke="#4a4a4a" stroke-width=".3">NO IMAGE</text></svg></div>
<div class="clr" style="left:964px;top:319px"><svg style="position:absolute;left:12px;top:4px" width="16" height="16" viewBox="0 0 16 16"><rect width="16" height="16" fill="#e1e1e1"/><path d="M7 6.4 L12.2 9 L11.6 15.4 Q9 16.2 6 15.3 L1 12.6 Z" fill="#bcbcbc" stroke="#a4a4a4" stroke-width=".5"/><path d="M3 13.5 L8 7.5 M5.5 14.8 L9.5 8.2 M8.5 15.5 L11 8.8" stroke="#d4d4d4" stroke-width=".7"/><path d="M13.3 1.9 L10.6 6.3" stroke="#8e8e8e" stroke-width="3.2" stroke-linecap="round"/><path d="M13.2 2.3 L11.2 5.6" stroke="#b8b8b8" stroke-width="1" stroke-linecap="round"/><path d="M7 6.2 L12.6 8.9" stroke="#8c8c8c" stroke-width="1.5"/></svg></div>
<div class="imgbox" style="left:880px;top:345px"><svg width="120" height="98" viewBox="0 0 120 98" style="position:absolute;left:0;top:0;overflow:visible"><ellipse cx="60.5" cy="52" rx="56" ry="47" fill="#c9c9c9" stroke="#c9c9c9" stroke-width="1.2"/><ellipse cx="60.5" cy="50.5" rx="56.5" ry="47" fill="#fff" stroke="#a6a6a6" stroke-width="1.4"/><ellipse cx="60.5" cy="51.5" rx="55.5" ry="46.6" fill="none" stroke="#d0d0d0" stroke-width="1"/><text x="61" y="54.5" text-anchor="middle" font-family="Liberation Sans,sans-serif" font-size="13" letter-spacing="0.9" fill="#4a4a4a" stroke="#4a4a4a" stroke-width=".3">NO IMAGE</text></svg></div>
<div class="clr" style="left:1103px;top:319px"><svg style="position:absolute;left:12px;top:4px" width="16" height="16" viewBox="0 0 16 16"><rect width="16" height="16" fill="#e1e1e1"/><path d="M7 6.4 L12.2 9 L11.6 15.4 Q9 16.2 6 15.3 L1 12.6 Z" fill="#bcbcbc" stroke="#a4a4a4" stroke-width=".5"/><path d="M3 13.5 L8 7.5 M5.5 14.8 L9.5 8.2 M8.5 15.5 L11 8.8" stroke="#d4d4d4" stroke-width=".7"/><path d="M13.3 1.9 L10.6 6.3" stroke="#8e8e8e" stroke-width="3.2" stroke-linecap="round"/><path d="M13.2 2.3 L11.2 5.6" stroke="#b8b8b8" stroke-width="1" stroke-linecap="round"/><path d="M7 6.2 L12.6 8.9" stroke="#8c8c8c" stroke-width="1.5"/></svg></div>
<div class="imgbox" style="left:1022px;top:345px"><svg width="120" height="98" viewBox="0 0 120 98" style="position:absolute;left:0;top:0;overflow:visible"><ellipse cx="60.5" cy="52" rx="56" ry="47" fill="#c9c9c9" stroke="#c9c9c9" stroke-width="1.2"/><ellipse cx="60.5" cy="50.5" rx="56.5" ry="47" fill="#fff" stroke="#a6a6a6" stroke-width="1.4"/><ellipse cx="60.5" cy="51.5" rx="55.5" ry="46.6" fill="none" stroke="#d0d0d0" stroke-width="1"/><text x="61" y="54.5" text-anchor="middle" font-family="Liberation Sans,sans-serif" font-size="13" letter-spacing="0.9" fill="#4a4a4a" stroke="#4a4a4a" stroke-width=".3">NO IMAGE</text></svg></div>
<div class="t" style="left:441px;top:463px">Search :</div>
<div class="combo" style="left:492px;top:460px;width:196px;height:21px;border-color:#d8dbe6"></div>
<div class="t" style="left:696px;top:463px">Room Type :</div>
<div class="combo" style="left:771px;top:460px;width:160px;height:21px"><div class="t" style="left:4px;top:3px;letter-spacing:.8px">&lt;---- Select ----&gt;</div><div class="arrow" style="left:147px;top:9px"></div></div>
<div class="gbtn" style="left:999px;top:457px;width:76px;height:25px;line-height:23px"><u>O</u>k</div>
<div class="gbtn" style="left:1079px;top:457px;width:76px;height:25px;line-height:23px"><u>C</u>ancel</div>
<div class="a" style="left:435px;top:485px;width:711px;height:1px;background:#a0a0a0"></div>
<div class="a" style="left:435px;top:486px;width:729px;height:263px;background:#fff;overflow:hidden">
<div class="dh" style="left:0px;width:31px;border-left:1px solid #fff;border-top:1px solid #fff;line-height:16px"></div>
<div class="dh" style="left:31px;width:120px;border-left:1px solid #fff;border-top:1px solid #fff;line-height:16px">Room Name</div>
<div class="dh" style="left:151px;width:95px;border-left:1px solid #fff;border-top:1px solid #fff;line-height:16px">Floor</div>
<div class="dh" style="left:246px;width:145px;border-left:1px solid #fff;border-top:1px solid #fff;line-height:16px">Room Type</div>
<div class="dh" style="left:391px;width:195px;border-left:1px solid #fff;border-top:1px solid #fff;line-height:16px">Room Description</div>
<div class="dh" style="left:586px;width:125px;border-left:1px solid #fff;border-top:1px solid #fff;line-height:16px">Available</div>
<div class="dr" style="top:17px"><div class="dc rh" style="left:0;width:31px">1</div><div class="dc" style="left:31px;width:120px">001</div><div class="dc" style="left:151px;width:95px">GF</div><div class="dc" style="left:246px;width:145px">Twin</div><div class="dc" style="left:391px;width:195px"></div><div class="dc" style="left:586px;width:125px">Yes</div></div>
<div class="dr" style="top:39px"><div class="dc rh" style="left:0;width:31px">2</div><div class="dc" style="left:31px;width:120px">002</div><div class="dc" style="left:151px;width:95px">GF</div><div class="dc" style="left:246px;width:145px">Twin</div><div class="dc" style="left:391px;width:195px"></div><div class="dc" style="left:586px;width:125px">Yes</div></div>
<div class="dr sel" style="top:61px"><div class="dc rh" style="left:0;width:31px"><div style="position:absolute;left:6px;top:6px;width:0;height:0;border-top:4.5px solid transparent;border-bottom:4.5px solid transparent;border-left:5px solid #222"></div>3</div><div class="dc" style="left:31px;width:120px">003</div><div class="dc" style="left:151px;width:95px">GF</div><div class="dc" style="left:246px;width:145px">Twin</div><div class="dc" style="left:391px;width:195px"></div><div class="dc" style="left:586px;width:125px">Yes</div></div>
<div class="dr" style="top:83px"><div class="dc rh" style="left:0;width:31px">4</div><div class="dc" style="left:31px;width:120px">004</div><div class="dc" style="left:151px;width:95px">GF</div><div class="dc" style="left:246px;width:145px">Twin</div><div class="dc" style="left:391px;width:195px"></div><div class="dc" style="left:586px;width:125px">Yes</div></div>
<div class="dr" style="top:105px"><div class="dc rh" style="left:0;width:31px">5</div><div class="dc" style="left:31px;width:120px">005</div><div class="dc" style="left:151px;width:95px">GF</div><div class="dc" style="left:246px;width:145px">Twin</div><div class="dc" style="left:391px;width:195px"></div><div class="dc" style="left:586px;width:125px">Yes</div></div>
<div class="dr" style="top:127px"><div class="dc rh" style="left:0;width:31px">6</div><div class="dc" style="left:31px;width:120px">006</div><div class="dc" style="left:151px;width:95px">GF</div><div class="dc" style="left:246px;width:145px">Twin</div><div class="dc" style="left:391px;width:195px"></div><div class="dc" style="left:586px;width:125px">Yes</div></div>
<div class="dr" style="top:149px"><div class="dc rh" style="left:0;width:31px">7</div><div class="dc" style="left:31px;width:120px">007</div><div class="dc" style="left:151px;width:95px">GF</div><div class="dc" style="left:246px;width:145px">Twin</div><div class="dc" style="left:391px;width:195px"></div><div class="dc" style="left:586px;width:125px">Yes</div></div>
<div class="dr" style="top:171px"><div class="dc rh" style="left:0;width:31px">8</div><div class="dc" style="left:31px;width:120px">008</div><div class="dc" style="left:151px;width:95px">GF</div><div class="dc" style="left:246px;width:145px">Twin</div><div class="dc" style="left:391px;width:195px"></div><div class="dc" style="left:586px;width:125px">Yes</div></div>
<div class="dr" style="top:193px"><div class="dc rh" style="left:0;width:31px">9</div><div class="dc" style="left:31px;width:120px">012</div><div class="dc" style="left:151px;width:95px">GF</div><div class="dc" style="left:246px;width:145px">Twin</div><div class="dc" style="left:391px;width:195px"></div><div class="dc" style="left:586px;width:125px">Vacant Dirty</div></div>
<div class="dr" style="top:215px"><div class="dc rh" style="left:0;width:31px">10</div><div class="dc" style="left:31px;width:120px">013</div><div class="dc" style="left:151px;width:95px">GF</div><div class="dc" style="left:246px;width:145px">Twin</div><div class="dc" style="left:391px;width:195px"></div><div class="dc" style="left:586px;width:125px">Yes</div></div>
<div class="dr" style="top:237px"><div class="dc rh" style="left:0;width:31px">11</div><div class="dc" style="left:31px;width:120px">014</div><div class="dc" style="left:151px;width:95px">GF</div><div class="dc" style="left:246px;width:145px">Twin</div><div class="dc" style="left:391px;width:195px"></div><div class="dc" style="left:586px;width:125px">Yes</div></div>
<div class="dr" style="top:259px"><div class="dc rh" style="left:0;width:31px">12</div><div class="dc" style="left:31px;width:120px">015</div><div class="dc" style="left:151px;width:95px">GF</div><div class="dc" style="left:246px;width:145px">Twin</div><div class="dc" style="left:391px;width:195px"></div><div class="dc" style="left:586px;width:125px">Yes</div></div>
<div class="a" style="left:713px;top:0;width:16px;height:264px;background:linear-gradient(90deg,#e8e8e8,#f4f4f4 40%,#f2f2f2)"></div>
<div class="a" style="left:714px;top:18px;width:14px;height:51px;border:1px solid #979797;border-radius:2px;background:linear-gradient(90deg,#f4f4f4,#e2e2e2 50%,#d0d0d0 51%,#dcdcdc)"></div>
<div class="a" style="left:718px;top:41px;width:6px;height:1px;background:#666;box-shadow:0 2px 0 #666,0 4px 0 #666"></div>
<div class="arrow" style="left:717px;top:7px;border-top:none;border-bottom:4px solid #444"></div>
<div class="arrow" style="left:717px;top:253px;border-top:4px solid #444"></div>
</div>
</body></html>
